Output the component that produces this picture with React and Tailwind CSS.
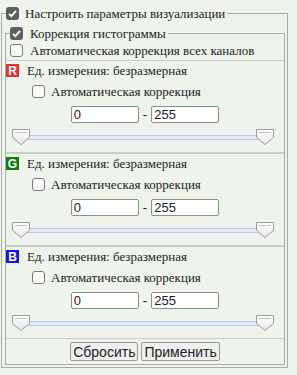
import React from 'react';

const Check = ({ checked }) =>
  checked ? (
    <span className="flex h-[13px] w-[13px] shrink-0 items-center justify-center rounded-[3px] bg-[#5f5f5f]">
      <svg width="11" height="11" viewBox="0 0 11 11">
        <path d="M2 5.8 L4.4 8.2 L9 2.8" fill="none" stroke="#fff" strokeWidth="1.9" />
      </svg>
    </span>
  ) : (
    <span className="block h-[13px] w-[13px] shrink-0 rounded-[3px] border border-[#7a7a7a] bg-[#fbfbfb]" />
  );

const Thumb = ({ className }) => (
  <svg className={className} width="18" height="16" viewBox="0 0 18 16">
    <defs>
      <linearGradient id="tg" x1="0" y1="0" x2="0" y2="1">
        <stop offset="0" stopColor="#ffffff" />
        <stop offset="1" stopColor="#e6e6e6" />
      </linearGradient>
    </defs>
    <path d="M0.5 0.5 H17.5 V8.5 L9 15.5 L0.5 8.5 Z" fill="url(#tg)" stroke="#9c9c9c" />
    <path d="M3 3.5 H15" stroke="#c4c4c4" />
  </svg>
);

const Slider = () => (
  <div className="relative ml-[6px] mr-[10px] h-[15px]">
    <div className="absolute left-[2px] right-[2px] top-[6px] h-[5px] border border-[#bccbe3] bg-[#e3ebf8]" />
    <Thumb className="absolute left-0 top-0" />
    <Thumb className="absolute right-0 top-0" />
  </div>
);

const channels = [
  { key: 'R', bg: 'bg-[#e5322f]' },
  { key: 'G', bg: 'bg-[#0b7d12]' },
  { key: 'B', bg: 'bg-[#1414ee]' },
];

const Channel = ({ label, bg }) => (
  <div className="border-y border-[#c9cec7] pb-[8px]">
    <div className="flex h-[19px] items-center gap-[8px]">
      <span
        className={`${bg} flex h-[13px] w-[13px] items-center justify-center font-[Liberation_Sans,Arial,sans-serif] text-[12px] font-bold leading-none text-white`}
      >
        {label}
      </span>
      <span>Ед. измерения: безразмерная</span>
    </div>
    <div className="flex h-[22px] items-center gap-[6px] pl-[26px]">
      <Check />
      <span>Автоматическая коррекция</span>
    </div>
    <div className="mt-[4px] flex h-[17px] items-center justify-center font-[Liberation_Sans,Arial,sans-serif] text-[13px] leading-[15px]">
      <div className="h-[17px] w-[68px] rounded-[2px] border border-[#8c8c8c] bg-white pl-[2px]">0</div>
      <span className="mx-[4px]">-</span>
      <div className="h-[17px] w-[68px] rounded-[2px] border border-[#8c8c8c] bg-white pl-[2px]">255</div>
    </div>
    <div className="mt-[6px]">
      <Slider />
    </div>
  </div>
);

export default function App() {
  return (
    <div className="h-[375px] w-[298px] border-r border-[#c6cbc4] bg-[#eef3ec] pt-[4px] font-[Liberation_Serif,Times_New_Roman,serif] text-[13px] leading-[15px] text-[#1c1c1c]">
      <fieldset className="ml-[1px] w-[287px] border border-[#a9ada7]">
        <legend className="ml-[4px] pr-[2px]">
          <span className="flex h-[18px] items-center gap-[6px]">
            <Check checked />
            <span>Настроить параметры визуализации</span>
          </span>
        </legend>
        <fieldset className="mb-[2px] ml-[3px] mr-[2px] mt-[4px] border border-[#a9ada7]">
          <legend className="ml-[4px] pr-[2px]">
            <span className="flex h-[15px] items-center gap-[7px]">
              <Check checked />
              <span>Коррекция гистограммы</span>
            </span>
          </legend>
          <div className="flex h-[19px] items-center gap-[7px] pl-[4px]">
            <Check />
            <span>Автоматическая коррекция всех каналов</span>
          </div>
          {channels.map((c) => (
            <Channel key={c.key} label={c.key} bg={c.bg} />
          ))}
          <div className="flex justify-center gap-[3px] pb-[3px] pt-[3px] font-[Liberation_Sans,Arial,sans-serif] text-[14px]">
            <button className="h-[19px] rounded-[2px] border border-[#9a9a9a] bg-[#efefef] px-[2px] leading-none text-[#222]">
              Сбросить
            </button>
            <button className="h-[19px] rounded-[2px] border border-[#9a9a9a] bg-[#efefef] px-[2px] leading-none text-[#222]">
              Применить
            </button>
          </div>
        </fieldset>
      </fieldset>
    </div>
  );
}
